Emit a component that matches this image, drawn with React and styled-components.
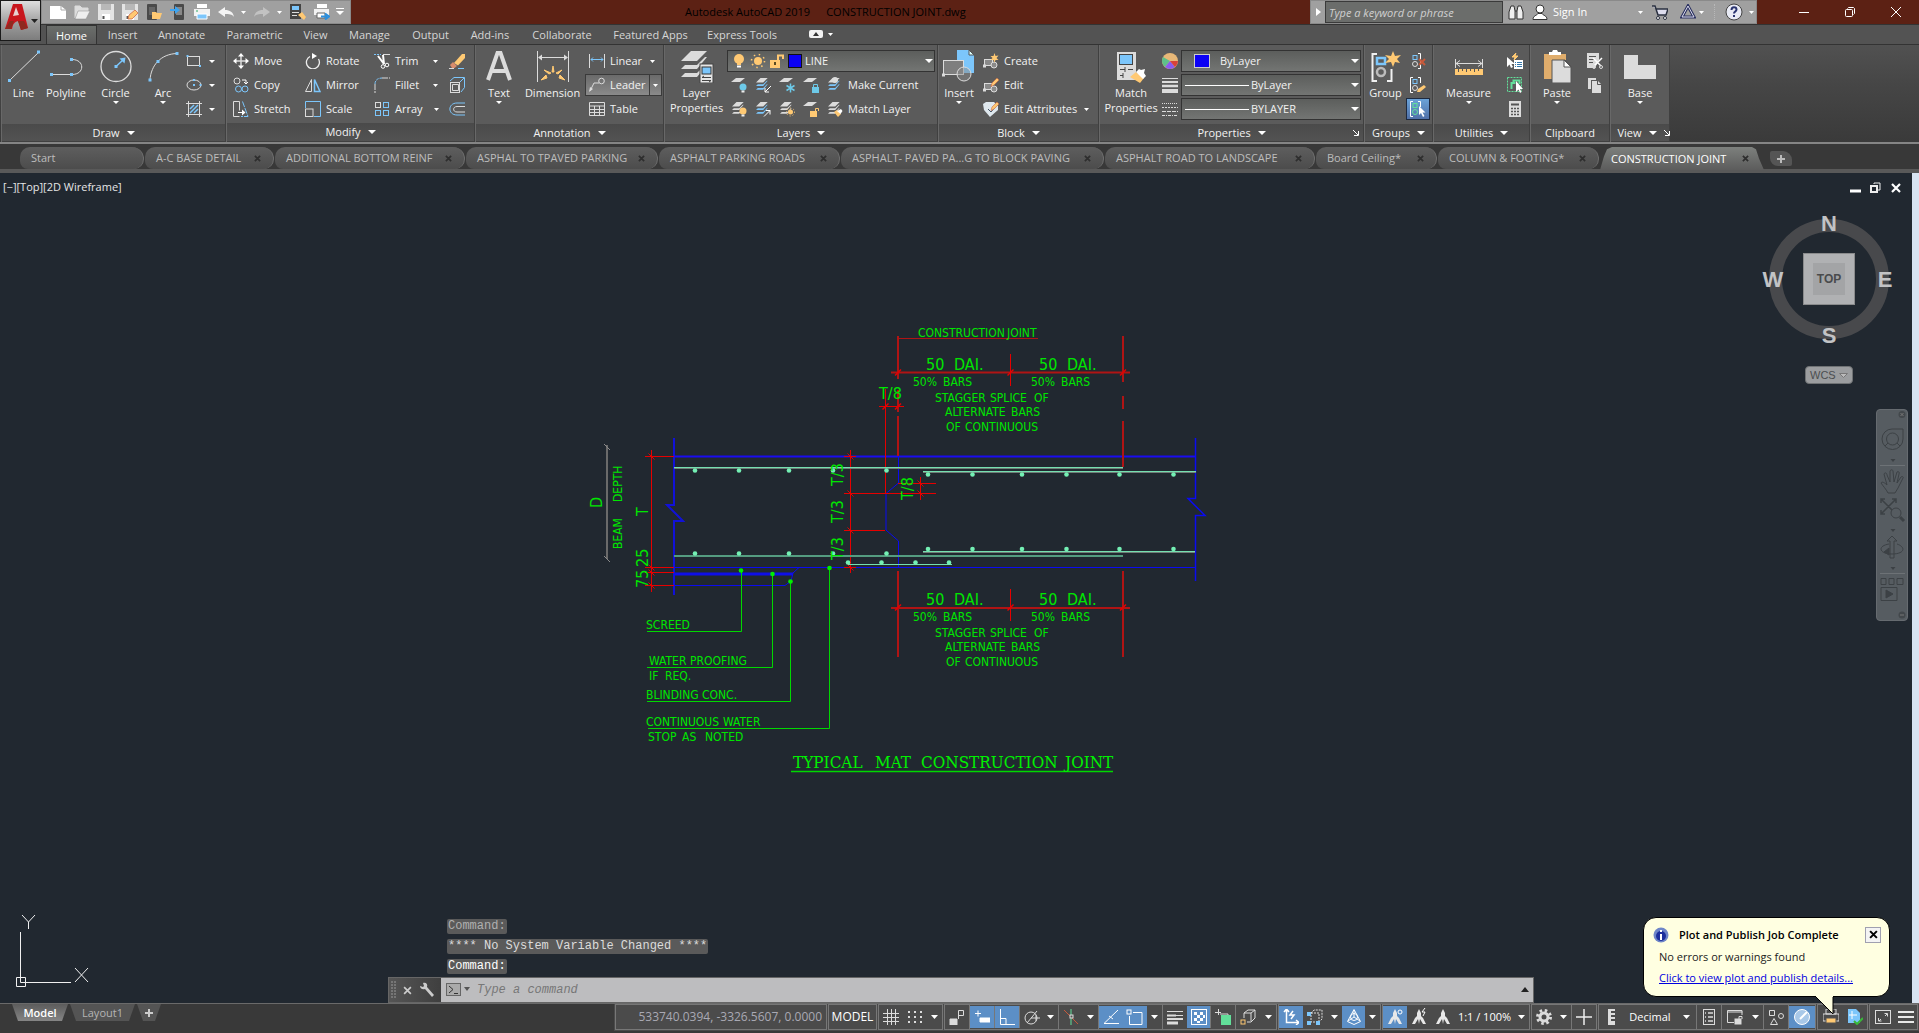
import React from 'react';
import styled, { createGlobalStyle, css } from 'styled-components';

const W = '#dcdcdc';
const B = '#7cc6fb';
const Y = '#ffc973';
const G = '#62e09a';
const R = '#c8593a';

const Global = createGlobalStyle`
  *, *::before, *::after { box-sizing: border-box; }
  html, body, #root { height: 100%; }
  body { margin: 0; background: #212830; color: #f2f2f2; font: 11px/16px "Open Sans", "Noto Sans", sans-serif; overflow: hidden; }
  button, input, select { font: inherit; color: inherit; margin: 0; padding: 0; border: 0; background: none; outline: 0; }
  svg { display: block; flex: none; }
  ul { list-style: none; margin: 0; padding: 0; }
`;

const Page = styled.div`
  height: 100vh;
  display: flex;
  flex-direction: column;
`;

/* ---------- title bar ---------- */
const TitleBar = styled.header`
  display: flex;
  height: 24px;
  flex: none;
  background: #5c2114;
  padding-left: 41px;
`;
const QuickBar = styled.div`
  display: flex;
  align-items: center;
  width: 310px;
  padding: 0 4px;
  background: #a0a0a0;
  border: 1px solid #8a8a8a;
`;
const QuickButton = styled.button`
  flex: none;
  width: ${p => p.$w || 24}px;
  height: 22px;
  display: flex;
  align-items: center;
  justify-content: center;
`;
const AppButton = styled.button`
  position: absolute;
  left: 0;
  top: 0;
  width: 41px;
  height: 41px;
  background: linear-gradient(#dedede, #9a9a9a 60%, #7d7d7d);
  border: 1px solid #1a1a1a;
`;
const WindowTitle = styled.h1`
  flex: 1;
  display: flex;
  gap: 16px;
  margin: 0;
  padding-left: 334px;
  font-size: 11px;
  font-weight: 400;
  line-height: 24px;
  color: #000;
  white-space: nowrap;
`;
const InfoCenter = styled.div`
  display: flex;
  align-items: center;
  flex: none;
  width: 447px;
  background: #a0a0a0;
  border: 1px solid #8a8a8a;
`;
const SearchBox = styled.input`
  flex: none;
  width: 178px;
  height: 22px;
  padding: 0 3px;
  background: #6b6d6b;
  border: 1px solid #3a3a3a;
  font-style: italic;
  &::placeholder { color: #d0d0d0; opacity: 1; }
`;
const SignIn = styled.button`
  width: 86px;
  padding-left: 1px;
  text-align: left;
  color: #fff;
`;
const Divider = styled.span`
  height: 16px;
  margin: 0 4px 0 10px;
  border-left: 1px dotted #b8b8b8;
`;
const WindowButtons = styled.div`
  display: flex;
  width: 162px;
  padding-left: 24px;
`;
const WindowButton = styled.button`
  width: 46px;
  display: flex;
  align-items: center;
  justify-content: center;
`;

/* ---------- ribbon ---------- */
const RibbonTabs = styled.nav`
  display: flex;
  align-items: flex-end;
  flex: none;
  height: 21px;
  padding-left: 46px;
  background: #535353;
  border-top: 1px solid #333;
  border-bottom: 1px solid #333;
`;
const RibbonTab = styled.button`
  width: ${p => p.$w}px;
  height: 19px;
  line-height: 17px;
  color: #d6d6d6;
  white-space: nowrap;
  ${p => p.$active && css`
    color: #fff;
    background: linear-gradient(#6b6e6b, #5a5a5a);
    border: 1px solid #333;
    border-bottom: 0;
  `}
`;
const Ribbon = styled.section`
  display: flex;
  flex: none;
  height: 99px;
  padding-left: 1px;
  background: linear-gradient(#515151, #464646 40%, #3a3a3a);
  border-bottom: 2px solid #858585;
`;
const Panel = styled.section`
  width: ${p => p.$w}px;
  flex: none;
  display: flex;
  flex-direction: column;
  background: #5b5b5b;
  border-left: 1px solid #686868;
  border-right: 1px solid #404040;
`;
const PanelBody = styled.div`
  flex: 1;
  display: flex;
  padding: 4px 0 0 ${p => p.$left || 0}px;
`;
const PanelTitle = styled.button`
  height: 19px;
  display: flex;
  align-items: center;
  justify-content: center;
  gap: 7px;
  padding: 0 4px;
  background: linear-gradient(#4a4a4a, #535353);
  border-bottom: 1px solid #404040;
  width: 100%;
`;
const TitleEdge = styled.span`
  flex: 1;
  display: flex;
  justify-content: flex-end;
`;
const Big = styled.button`
  width: ${p => p.$w}px;
  height: 75px;
  display: flex;
  flex-direction: column;
  align-items: center;
  white-space: pre;
  line-height: 15px;
  svg + span { margin-top: 2px; }
  span + svg { margin-top: 1px; }
`;
const Stack = styled.div`
  display: flex;
  flex-direction: column;
  width: ${p => p.$w}px;
`;
const Small = styled.button`
  height: 24px;
  display: flex;
  align-items: center;
  gap: 5px;
  padding-left: 4px;
  white-space: nowrap;
  > svg:last-child:not(:first-child) { margin-left: ${p => (p.$push ? p.$push : 2)}px; }
`;
const IconRow = styled.div`
  display: flex;
  align-items: center;
  height: 24px;
`;
const SplitButton = styled.div`
  display: flex;
  width: 77px;
  height: 22px;
  margin: 1px 0;
  border: 1px solid #3a3a3a;
  background: linear-gradient(#6a6a6a, #8a8a8a);
`;
const SplitMain = styled.button`
  flex: 1;
  display: flex;
  align-items: center;
  gap: 5px;
  padding-left: 3px;
  border-right: 1px solid #3a3a3a;
`;
const SplitArrow = styled.button`
  width: 11px;
  display: flex;
  align-items: center;
  justify-content: center;
`;
const Combo = styled.label`
  display: flex;
  align-items: center;
  gap: ${p => p.$gap || 4}px;
  height: 22px;
  margin: 1px 0;
  padding: 0 1px 0 ${p => p.$left || 4}px;
  border: 1px solid #333;
  background: linear-gradient(#5c5e5c, #737573);
  select { flex: 1; min-width: 0; appearance: none; }
  option { color: #111; }
`;
const Swatch = styled.span`
  width: ${p => p.$w || 14}px;
  height: 14px;
  background: #0b00f5;
  border: 1px solid ${p => p.$edge || '#111'};
`;
const LineSample = styled.span`
  width: 64px;
  height: 1px;
  background: #fff;
`;
const ActiveIcon = styled.button`
  width: 24px;
  height: 22px;
  margin-top: 1px;
  display: flex;
  align-items: center;
  justify-content: center;
  background: linear-gradient(#6aa2d8, #5070a8);
  border: 1px solid #1e2a40;
`;

/* ---------- file tabs ---------- */
const FileTabs = styled.nav`
  display: flex;
  flex: none;
  height: 29px;
  padding: 3px 0 0 20px;
  background: #383838;
  border-bottom: 4px solid #595959;
`;
const FileTab = styled.div`
  flex: none;
  display: flex;
  align-items: center;
  justify-content: space-between;
  width: ${p => p.$w}px;
  height: 22px;
  margin-right: 1px;
  padding: 0 12px 0 11px;
  border-radius: 10px 12px 10px 8px;
  border-right: 1px solid #707070;
  background: linear-gradient(#5e5e5e, #4c4c4c);
  color: #bdbdbd;
  white-space: nowrap;
  ${p => p.$active && css`
    color: #fff;
    height: 23px;
    border: 0;
    padding-right: 15px;
    border-radius: 0;
    background: linear-gradient(#7d807d, #5c5c5c);
    clip-path: polygon(0 100%, 4px 40%, 7px 10%, 12px 0, calc(100% - 12px) 0, calc(100% - 8px) 10%, calc(100% - 5px) 50%, 100% 100%);
  `}
`;
const NewTab = styled.button`
  width: 22px;
  height: 15px;
  margin: 4px 0 0 5px;
  display: flex;
  align-items: center;
  justify-content: center;
  background: #555;
  border-radius: 2px 9px 2px 8px;
`;

/* ---------- drawing area ---------- */
const Canvas = styled.main`
  position: relative;
  flex: 1;
  min-height: 0;
  background: #212830;
  border-right: 7px solid #d8e4f2;
`;
const ViewLabel = styled.button`
  position: absolute;
  left: 3px;
  top: 6px;
  color: #e6e6e6;
`;
const ViewportButtons = styled.div`
  position: absolute;
  right: 8px;
  top: 8px;
  display: flex;
  gap: 7px;
`;
const Drawing = styled.svg`
  position: absolute;
  left: 580px;
  top: 137px;
`;
const Cad = styled.text`
  font-family: "DejaVu Sans Condensed", "DejaVu Sans", sans-serif;
  font-size: ${p => (p.$wide ? 16 : 12)}px;
  font-weight: 400;
  fill: #00e600;
`;
const CadTitle = styled.text`
  font-family: "DejaVu Serif Condensed", "DejaVu Serif", serif;
  font-size: 17px;
  fill: #00f000;
`;
const Ucs = styled.svg`
  position: absolute;
  left: 14px;
  bottom: 12px;
`;
const Compass = styled.svg`
  position: absolute;
  right: 16px;
  top: 34px;
  text { font-family: "Liberation Sans", sans-serif; font-weight: 700; text-anchor: middle; }
`;
const Wcs = styled.button`
  position: absolute;
  right: 59px;
  top: 193px;
  width: 48px;
  height: 18px;
  display: flex;
  align-items: center;
  justify-content: space-between;
  padding: 0 4px;
  border: 1px solid #6f7274;
  border-radius: 4px;
  background: #9b9d9f;
  color: #4b4e50;
  font: 11px/14px "Liberation Sans", sans-serif;
`;
const NavBar = styled.div`
  position: absolute;
  right: 4px;
  top: 236px;
  width: 32px;
  height: 212px;
  border-radius: 4px;
  background: #565c61;
  border: 1px solid #666b70;
`;
const CommandDock = styled.section`
  position: absolute;
  left: 388px;
  bottom: 0;
  width: 1146px;
  font: 12px/15px "Liberation Mono", monospace;
`;
const History = styled.ul`
  display: flex;
  flex-direction: column;
  align-items: flex-start;
  gap: 5px;
  padding: 0 0 3px 59px;
`;
const HistoryLine = styled.li`
  padding: 0 1px;
  border-radius: 2px;
  background: #5a5a5a;
  color: ${p => p.$c};
`;
const CommandBar = styled.div`
  display: flex;
  height: 26px;
  border: 1px solid #666;
  background: #bdbdbf;
`;
const CommandTools = styled.div`
  display: flex;
  align-items: center;
  gap: 7px;
  width: 52px;
  padding-left: 2px;
  background: linear-gradient(90deg, #555, #3f3f3f);
`;
const CommandInput = styled.input`
  flex: 1;
  padding-left: 6px;
  font-style: italic;
  color: #333;
  &::placeholder { color: #777; opacity: 1; }
`;
const PlainButton = styled.button`
  display: flex;
  align-items: center;
  justify-content: center;
`;

/* ---------- status bar ---------- */
const StatusBar = styled.footer`
  display: flex;
  flex: none;
  justify-content: space-between;
  height: 30px;
  background: #393939;
  border-top: 1px solid #6a6a6a;
`;
const LayoutTabs = styled.nav`
  display: flex;
  padding-left: 12px;
  gap: 2px;
`;
const LayoutTab = styled.button`
  height: 17px;
  width: ${p => p.$w}px;
  line-height: 16px;
  color: #b5b5b5;
  background: #545454;
  clip-path: polygon(0 0, 100% 0, calc(100% - 6px) 100%, 6px 100%);
  display: flex;
  align-items: center;
  justify-content: center;
  ${p => p.$active && css`
    color: #fff;
    font-weight: 600;
    background: linear-gradient(#5c5c5c, #858585);
  `}
`;
const Tray = styled.div`
  display: flex;
  height: 27px;
  padding-left: 1px;
  background: #4b4b4b;
`;
const Group = styled.div`
  display: flex;
  align-items: center;
  height: 26px;
  margin-right: 1px;
  border: 1px solid #777;
`;
const Cell = styled.button`
  width: ${p => p.$w || 24}px;
  height: ${p => (p.$on ? 22 : 24)}px;
  display: flex;
  align-items: center;
  justify-content: center;
  border-right: ${p => (p.$line ? '1px solid #777' : 0)};
  background: ${p => (p.$on ? '#5c8fc6' : 'none')};
`;
const Coords = styled.output`
  width: 210px;
  padding-right: 4px;
  text-align: right;
  font-size: 12px;
  color: #a9a9b4;
`;
const StatusText = styled.button`
  width: ${p => p.$w}px;
  text-align: center;
  white-space: nowrap;
  font-size: ${p => p.$size || 11}px;
  color: #fff;
`;

/* ---------- notification ---------- */
const Balloon = styled.aside`
  position: absolute;
  right: 29px;
  bottom: 36px;
  width: 247px;
  height: 80px;
  padding: 8px 8px 0 15px;
  background: #ffffe1;
  border: 1px solid #000;
  border-radius: 13px;
  color: #222;
`;
const BalloonHead = styled.div`
  display: flex;
  align-items: center;
  height: 17px;
  margin-left: -6px;
  gap: 10px;
  color: #000;
  strong { flex: 1; font-weight: 600; white-space: nowrap; }
`;
const BalloonText = styled.p`
  margin: 6px 0 5px;
`;
const BalloonLink = styled.a`
  color: #0000e0;
`;
const BalloonClose = styled.button`
  width: 16px;
  height: 16px;
  display: flex;
  align-items: center;
  justify-content: center;
  border: 1px solid #a0a0b0;
  background: #f4f4f4;
`;
const Tail = styled.svg`
  position: absolute;
  left: 170px;
  top: 77px;
`;

/* ---------- icons ---------- */
const I = ({ w = 16, h = 16, s = W, sw = 1, f = 'none', children, ...rest }) => (
  <svg width={w} height={h} viewBox={`0 0 ${w} ${h}`} fill={f} stroke={s} strokeWidth={sw} aria-hidden="true" {...rest}>
    {children}
  </svg>
);
const Caret = ({ w = 6, c = '#fff' }) => (
  <svg width={w} height={Math.ceil(w / 2)} viewBox="0 0 10 5" preserveAspectRatio="none" aria-hidden="true"><path d="M0 0h10L5 5z" fill={c} /></svg>
);
const Cross = ({ c = '#2e2e2e', size = 7, sw = 2 }) => (
  <svg width={size} height={size} viewBox="0 0 8 8" fill="none" stroke={c} strokeWidth={sw} aria-hidden="true"><path d="M1 1l6 6M7 1L1 7" /></svg>
);
const Dots = ({ pts, c = B, r = 1.5 }) => pts.map(([x, y]) => (
  <rect key={`${x},${y}`} x={x - r} y={y - r} width={r * 2} height={r * 2} fill={c} stroke="none" />
));

const LineIcon = () => <I w={34} h={34}><path d="M3 31L32 3" /><Dots pts={[[2.5, 31.5], [31.5, 3]]} /></I>;
const PolyIcon = () => <I w={34} h={34}><path d="M3 25.5H23M23 10.5c13 0 13 15 0 15" /><Dots pts={[[2.5, 25.5], [22.5, 25.5], [22.5, 10.5]]} /></I>;
const CircleIcon = () => <I w={34} h={34}><circle cx="17" cy="17.5" r="15" strokeWidth="1.3" /><path d="M17 17.5L25 10" stroke={B} strokeWidth="1.5" /><path d="M20.5 9.5l6-1-1 6z" fill={B} stroke="none" /><Dots pts={[[17, 17.5]]} /></I>;
const ArcIcon = () => <I w={34} h={34}><path d="M4 31C5 16 15 5 31 4.5" /><Dots pts={[[4, 31], [12, 12.5], [31, 4.5]]} /></I>;
const RectIcon = () => <I><rect x="1.5" y="3.5" width="12" height="9" /><Dots pts={[[1.5, 3], [14, 13]]} r={1} /></I>;
const EllipseIcon = () => <I><ellipse cx="8" cy="8" rx="7" ry="5" /><Dots pts={[[8, 3], [8, 8], [14.5, 8]]} r={1} /></I>;
const HatchIcon = () => <I><path d="M2.5 0v16M13.5 0v16M0 2.5h16M0 13.5h16" /><path d="M4 8l4-4M4 12l8-8M8 12l4-4" stroke={B} strokeWidth="1.5" /></I>;
const MoveIcon = () => <I><path d="M8 2v12M2 8h12" strokeWidth="1.5" /><path d="M8 0l3 3.5H5zM8 16l3-3.5H5zM0 8l3.5-3v6zM16 8l-3.5-3v6z" fill="#fff" stroke="none" /></I>;
const CopyIcon = () => <I><circle cx="4" cy="4" r="3" /><path d="M9 3h4v4M11 5l2 2 2-2" stroke="#fff" /><circle cx="5.500" cy="12" r="3" stroke={B} /><circle cx="12" cy="12" r="3" stroke={B} /></I>;
const StretchIcon = () => <I><path d="M6.5 15.5h-6V.5h6v9" /><path d="M5 11.5h5" stroke="#fff" /><path d="M9 8.5l3.5 3L9 14.5z" fill="#fff" stroke="none" /><path d="M9.5.5l5.5 15H8" stroke={B} strokeDasharray="6 1" /></I>;
const RotateIcon = () => <I><path d="M5 3.5A6.5 6.5 0 1 0 13.5 6" stroke="#eee" strokeWidth="1.3" /><path d="M7 0l5 3-5 3z" fill="#fff" stroke="none" /></I>;
const MirrorIcon = () => <I><path d="M6.5 2.5v12H.5z" /><path d="M9.5 2.5v12h5.5z" stroke={B} strokeWidth="1.5" /></I>;
const ScaleIcon = () => <I><path d="M.5 7V.5h15v15H9" stroke={B} /><rect x=".5" y="8" width="7.5" height="7.5" /></I>;
const TrimIcon = () => <I><path d="M0 1.5h7" stroke={B} strokeDasharray="2 1" /><path d="M9 1.5h7" /><path d="M4 3l6 8M9 2l1 9" stroke="#fff" strokeWidth="2" /><circle cx="9" cy="13.5" r="1.8" stroke="#fff" /><circle cx="13" cy="12" r="1.8" stroke="#fff" /></I>;
const FilletIcon = () => <I><path d="M1 7C1 3 4 1 8 1" stroke={B} strokeDasharray="3 1" /><path d="M8 1h8M1 7v9" strokeDasharray="6 1" /></I>;
const ArrayIcon = () => <I><rect x="1.5" y="1.5" width="5" height="5" /><rect x="9.5" y="1.5" width="5" height="5" stroke={B} /><rect x="1.5" y="9.5" width="5" height="5" stroke={B} /><rect x="9.5" y="9.5" width="5" height="5" stroke={B} /></I>;
const EraseIcon = () => <I><path d="M5 10L13 1l3 0v4L9 12.5z" fill={Y} stroke="none" /><path d="M1 12l3-3 4 4-2.5 2H3z" fill="#d98c6c" stroke="none" /><path d="M9 15.5h6" stroke={B} /><path d="M0 15.5h5" /></I>;
const ExplodeIcon = () => <I><rect x="1.5" y="5.5" width="9" height="10" /><path d="M3.5 7.5h6v6h-6z" stroke={W} /><path d="M1 4L5 .5h10.5v10L12 15M11 5l4-4" stroke={B} /></I>;
const OffsetIcon = () => <I><path d="M16 2H8C-1.5 2-1.5 14 8 14h8" stroke={B} /><path d="M16 5.5H8c-4.5 0-4.5 5.5 0 5.5h8" /></I>;
const TextIcon = () => <I w={34} h={34} s={W} sw={4}><path d="M6 31L15.5 4h3L28 31M9 22h16" /></I>;
const DimIcon = () => <I w={34} h={34}><path d="M1.5 2v31M32.5 2v31M3 8.5h28" /><path d="M6 5.5L2 8.5l4 3zM28 5.5l4 3-4 3z" fill={W} stroke="none" /><path d="M5 31l6-2-1-3zM8 21l5 4 2-1zM17 17l-1 6h2zM26 21l-4 4-2-1zM29 31l-6-2 1-3z" fill={Y} stroke={Y} /></I>;
const LinearIcon = () => <I><path d="M.5 1v14M15.5 1v14" /><path d="M2 6.5h12M4 4.5l-2 2 2 2M12 4.5l2 2-2 2" stroke={B} /></I>;
const LeaderIcon = () => <I><path d="M1 14L5 6h5" /><circle cx="12.5" cy="4" r="2.8" /><path d="M0 15l1-5 3 2z" fill={W} stroke="none" /></I>;
const TableIcon = () => <I><path d="M.5 1.5h15v13H.5zM.5 5h15M.5 8.5h15M.5 11.5h15M5.5 5v9M10.5 5v9" /></I>;
const sheets = (x = 0, y = 0, k = 1, mid = W) => (
  <g transform={`translate(${x} ${y}) scale(${k})`} stroke="none">
    <path d="M0 5L5 0h8L8 5z" fill={W} /><path d="M0 9l2-2h6l4-4h1L8 9z" fill={mid} /><path d="M0 13l2-2h6l4-4h1L8 13z" fill={mid} />
  </g>
);
const LayerPropIcon = () => <I w={34} h={34}>{sheets(1, 2, 2)}<rect x="20" y="15" width="13" height="19" fill="#e6e6e6" stroke="#444" /><rect x="22" y="18" width="9" height="7" fill={B} stroke="#333" /><path d="M22 28.5h9M22 31.5h9M24 27l-2 1.5M29 33l2-1.5" stroke="#444" /></I>;
const LayerIcon = ({ kind }) => (
  <I>
    {['bulb', 'freeze', 'lock', 'unlock'].includes(kind) ? <path d="M0 5L5 1h9L9 5z" fill={W} stroke="none" /> : sheets(1, 1, 0.9, ['in', 'out', 'cur'].includes(kind) ? B : W)}
    {kind === 'bulb' && <><circle cx="12" cy="10" r="3.5" fill="#6dc9e8" stroke="none" /><path d="M10.5 14.5h3" stroke="#eee" strokeWidth="2" /></>}
    {kind === 'bulbOn' && <><circle cx="12" cy="10" r="3.5" fill={Y} stroke="none" /><path d="M10.5 14.5h3" stroke="#eee" strokeWidth="2" /></>}
    {kind === 'in' && <path d="M16 9l-6 6M10 11v4h4" stroke="#fff" />}
    {kind === 'out' && <path d="M9 15.5l6-6M11 9.5h4v4" stroke="#fff" />}
    {kind === 'freeze' && <path d="M11.5 6.5v9M7.5 8.5l8 5M15.5 8.5l-8 5" stroke="#6dc9e8" strokeWidth="1.5" />}
    {kind === 'sun' && <><circle cx="11.5" cy="11" r="2.5" fill={Y} stroke="none" /><circle cx="11.5" cy="11" r="4" stroke={Y} strokeDasharray="1 2" /></>}
    {kind === 'lock' && <><rect x="9" y="10" width="7" height="6" fill="#6dc9e8" stroke="none" /><path d="M10.5 10V7.5h4V10" stroke="#6dc9e8" /></>}
    {kind === 'unlock' && <><rect x="7" y="10" width="7" height="6" fill={Y} stroke="none" /><path d="M12.5 10V7.5h3V10" stroke={Y} /></>}
    {kind === 'cur' && <circle cx="8" cy="3" r="3" fill={W} stroke="none" />}
    {kind === 'match' && <><path d="M7 11l3-2 4 4-3 3z" fill={Y} stroke="none" /><path d="M10 10l4-2 1.5 2-2 3z" fill="#fff" stroke="none" /></>}
  </I>
);
const BulbIcon = () => <I><circle cx="8" cy="6" r="5" fill={Y} stroke="none" /><path d="M6 10h4v2H6z" fill={Y} stroke="none" /><path d="M6 13.5h4" stroke="#fff" strokeWidth="2" /></I>;
const SunIcon = () => <I><circle cx="8" cy="8" r="4" fill={Y} stroke="none" /><circle cx="8" cy="8" r="6.5" stroke={Y} strokeWidth="1.6" strokeDasharray="1.5 3.6" /></I>;
const LockIcon = () => <I><rect x="1" y="7" width="10" height="8" fill={Y} stroke="none" /><path d="M9 7V2.5h5V6" stroke={Y} strokeWidth="2" /><path d="M6 9v3" stroke="#5a4a20" strokeWidth="2" /></I>;
const InsertIcon = () => <I w={34} h={34}><path d="M15 1h12l5 5v18H15z" fill={B} stroke="none" /><path d="M27 1v5h5z" fill="#dff" stroke="#555" /><rect x="1.5" y="11.5" width="20" height="14" fill="#7e7e7e" /><circle cx="22" cy="25" r="7" fill="#8a8a8a80" /><Dots pts={[[1.5, 26]]} c={W} /></I>;
const BlockIcon = ({ kind }) => (
  <I>
    {kind === 'attr'
      ? <><path d="M0 3l3-2h8l4 4v4l-8 7-6-7z" fill="#dfe8ee" stroke="none" /><path d="M5 8l3 3 5-6" stroke="#456" /></>
      : <><rect x="1.5" y="6.5" width="8" height="6" fill="#8a8a8a" /><circle cx="11" cy="12" r="3" fill="#8a8a8a" /><Dots pts={[[1.5, 13]]} c={W} /></>}
    {kind === 'new' ? <path d="M11.5 0l1 3 3-.5-2 2.5 2 2-3 0-1 2.5-1-2.5-3 0 2-2-2-2 3 0z" fill={Y} stroke="none" />
      : <path d="M8 9.5L9 6l5-5 2 2-5 5z" fill={Y} stroke={R} strokeWidth=".5" />}
  </I>
);
const MatchPropIcon = () => <I w={34} h={34}><rect x="3" y="3" width="19" height="28" fill={W} stroke="none" /><rect x="5.5" y="5.5" width="13" height="10" fill={B} stroke="#444" /><path d="M6 20.5h5M14 20.5h5M6 26.5h3M11 18v5M9 24v5" stroke="#444" /><path d="M16 28l6-5 8 6-4 5z" fill={Y} stroke="none" /><path d="M22 23l3-3 2 1 4-1-1 4 2 3-3 3z" fill="#fff" stroke="none" /></I>;
const WheelIcon = () => <I s="none"><circle cx="8" cy="8" r="8" fill="#e8b878" /><path d="M8 8L1 4a8 8 0 0 0 2 10z" fill="#5fc08a" /><path d="M8 8l-5 6a8 8 0 0 0 10 0z" fill="#8a5cf0" /><path d="M8 8l5 6a8 8 0 0 0 3-6z" fill="#d8423a" /></I>;
const WeightIcon = () => <I><path d="M0 1.5h16" /><path d="M0 5h16" strokeWidth="2" /><path d="M0 9h16" strokeWidth="2.5" /><path d="M0 14h16" strokeWidth="4" /></I>;
const LtypeIcon = () => <I><path d="M0 2.5h16" strokeDasharray="1 1" /><path d="M0 6.5h16" strokeDasharray="2 1" /><path d="M0 10.5h16" strokeDasharray="4 1" /><path d="M0 14.5h16" strokeDasharray="3 1 1 1" /></I>;
const GroupIcon = () => <I w={34} h={34}><path d="M8 5H3.5v27H8M18 32h4.5V20" stroke="#f0f0f0" strokeWidth="2" /><path d="M8 9h8v6H8z" stroke={B} strokeWidth="2.5" /><circle cx="12" cy="23" r="4" strokeWidth="2.5" stroke="#bbb" /><path d="M24 2l2 5 6-1-4 4 3 4-5-1-2 5-2-5-6 1 4-4-4-4 6 1z" fill={Y} stroke="none" /></I>;
const UngroupIcon = ({ edit, cur }) => <I><path d={edit || cur ? 'M3 .5H.5v15H3M8 .5h2.5V6' : 'M8 .5h2.5v15H8'} stroke="#fff" /><rect x="3" y="2.5" width="4" height="4" stroke={cur ? G : B} /><circle cx="5" cy="11" r="2.5" stroke={cur ? G : W} />{cur ? <path d="M9 5v9l2-2 2 4 1.5-1-2-3.5h3z" fill="#fff" stroke="none" /> : edit ? <path d="M7 15l1-3 6-4 2 2-6 5z" fill={Y} stroke="none" /> : <path d="M9 6l6 6M15 6l-6 6" stroke={R} strokeWidth="2" />}</I>;
const MeasureIcon = () => <I w={34} h={34}><path d="M3.5 10v9M30.5 10v9M4 14.5h26M8 11.5l-4 3 4 3M26 11.5l4 3-4 3" /><path d="M3 20h28v6H3z" fill={Y} stroke="none" /><path d="M6.5 20v3M10.5 20v2M14.5 20v3M18.5 20v2M22.5 20v3M26.5 20v2" stroke="#555" /></I>;
const QSelIcon = () => <I><path d="M0 4v10l2.5-2.5L4 15l2-1-1.5-3H8z" fill="#fff" stroke="none" /><path d="M9 0L5 4l3 0-1 3 4-4-3 0z" fill={Y} stroke={Y} /><rect x="7" y="7" width="9" height="9" fill="#fff" stroke="none" /><path d="M8 9.5h1M8 11.5h1M8 13.5h1M10 9.5h5M10 11.5h5M10 13.5h5" stroke="#37a" /></I>;
const SelAllIcon = () => <I><rect x=".5" y=".5" width="14" height="14" stroke={G} strokeDasharray="2 1" /><path d="M4.5 12V6h4M9.5 3.5h3V7M6.5 6V3.5h3" stroke={G} strokeWidth="2" /><path d="M9 4v11l2.5-2.5L13 16l1.5-1L13 12h3z" fill="#fff" stroke="none" /></I>;
const CalcIcon = () => <I><rect x="2" y="0" width="12" height="16" fill={W} stroke="none" /><path d="M4 3.5h8" stroke="#555" strokeWidth="2" /><path d="M4 7.5h8M4 10.5h8M4 13.5h8" stroke="#555" strokeWidth="1.5" strokeDasharray="2 1" /></I>;
const PasteIcon = () => <I w={34} h={34} s="none"><path d="M4 5h22v25H4z" fill="#e0ad6c" /><path d="M9 6V3h3l1-2h4l1 2h3v3z" fill="#fff" /><path d="M12 11h13l6 6v17H12z" fill="#dcdcdc" stroke="#555" /><path d="M24 11v7h7z" fill="#fff" stroke="#555" /></I>;
const CutIcon = () => <I><path d="M0 0h12v7l-4 8H0z" fill={W} stroke="none" /><path d="M2 3.5h7M2 6.5h5M2 9.5h4" stroke="#555" /><path d="M6 5l8 8M15 5l-8 8" stroke="#fff" strokeWidth="1.5" /><circle cx="7" cy="14" r="1.5" /><circle cx="14" cy="14" r="1.5" /></I>;
const CopyClipIcon = () => <I><path d="M1 1h8v2H4v9H1z" fill={W} stroke="none" /><path d="M5 4h6l3 3v9H5z" fill={W} stroke="none" /><path d="M10.5 4v3.5H14" stroke="#555" /></I>;
const BaseIcon = () => <I w={34} h={34} s="none"><path d="M1 6h14v10h18v14H1z" fill={W} /></I>;

/* ---------- ribbon content ---------- */
const RIBBON_TABS = [['Home', 51], ['Insert', 51], ['Annotate', 67], ['Parametric', 79], ['View', 43], ['Manage', 65], ['Output', 57], ['Add-ins', 62], ['Collaborate', 82], ['Featured Apps', 95], ['Express Tools', 88]];
const FILE_TABS = [['Start', 124], ['A-C BASE DETAIL', 129], ['ADDITIONAL BOTTOM REINF', 190], ['ASPHAL TO TPAVED PARKING', 192], ['ASPHALT PARKING ROADS', 181], ['ASPHALT- PAVED PA...G TO BLOCK PAVING', 263], ['ASPHALT ROAD TO LANDSCAPE', 210], ['Board Ceiling*', 121], ['COLUMN & FOOTING*', 161], ['CONSTRUCTION JOINT', 164]];

function BigTool({ icon, label, w, arrow }) {
  return <Big $w={w}>{icon}<span>{label}</span>{arrow && <Caret />}</Big>;
}
function RibbonPanel({ title, w, left, arrow = true, launcher, children }) {
  return (
    <Panel $w={w}>
      <PanelBody $left={left}>{children}</PanelBody>
      <PanelTitle>
        {launcher && <TitleEdge />}
        {title}
        {arrow && <Caret w={8} />}
        {launcher && <TitleEdge><I w={6} h={6} s="#fff"><path d="M0 0l5 5M5.5 1v4.5H1" /></I></TitleEdge>}
      </PanelTitle>
    </Panel>
  );
}

function RibbonArea() {
  return (
    <Ribbon>
      <RibbonPanel title="Draw" w={225}>
        <BigTool w={43} icon={<LineIcon />} label="Line" />
        <BigTool w={42} icon={<PolyIcon />} label="Polyline" />
        <BigTool w={57} icon={<CircleIcon />} label="Circle" arrow />
        <BigTool w={38} icon={<ArcIcon />} label="Arc" arrow />
        <Stack $w={40}>
          <Small aria-label="Rectangle"><RectIcon /><Caret /></Small>
          <Small aria-label="Ellipse"><EllipseIcon /><Caret /></Small>
          <Small aria-label="Hatch"><HatchIcon /><Caret /></Small>
        </Stack>
      </RibbonPanel>
      <RibbonPanel title="Modify" w={249} left={2}>
        <Stack $w={72}>
          <Small><MoveIcon />Move</Small>
          <Small><CopyIcon />Copy</Small>
          <Small><StretchIcon />Stretch</Small>
        </Stack>
        <Stack $w={69}>
          <Small><RotateIcon />Rotate</Small>
          <Small><MirrorIcon />Mirror</Small>
          <Small><ScaleIcon />Scale</Small>
        </Stack>
        <Stack $w={75}>
          <Small $push={9}><TrimIcon />Trim<Caret w={5} /></Small>
          <Small $push={9}><FilletIcon />Fillet<Caret w={5} /></Small>
          <Small $push={6}><ArrayIcon />Array<Caret w={5} /></Small>
        </Stack>
        <Stack $w={24}>
          <Small aria-label="Erase"><EraseIcon /></Small>
          <Small aria-label="Explode"><ExplodeIcon /></Small>
          <Small aria-label="Offset"><OffsetIcon /></Small>
        </Stack>
      </RibbonPanel>
      <RibbonPanel title="Annotation" w={189} left={2}>
        <BigTool w={42} icon={<TextIcon />} label="Text" arrow />
        <BigTool w={65} icon={<DimIcon />} label="Dimension" />
        <Stack $w={78}>
          <Small $push={3}><LinearIcon />Linear<Caret w={5} /></Small>
          <SplitButton>
            <SplitMain><LeaderIcon />Leader</SplitMain>
            <SplitArrow aria-label="Leader options"><Caret w={5} /></SplitArrow>
          </SplitButton>
          <Small><TableIcon />Table</Small>
        </Stack>
      </RibbonPanel>
      <RibbonPanel title="Layers" w={274} left={1}>
        <BigTool w={61} icon={<LayerPropIcon />} label={'Layer\nProperties'} />
        <Stack $w={208}>
          <Combo $gap={3} $left={3}>
            <BulbIcon /><SunIcon /><LockIcon /><Swatch />
            <select aria-label="Layer"><option>LINE</option></select><Caret w={8} />
          </Combo>
          <IconRow>
            {['bulb', 'in', 'freeze', 'lock'].map(k => <QuickButton key={k} aria-label={k}><LayerIcon kind={k} /></QuickButton>)}
            <Small><LayerIcon kind="cur" />Make Current</Small>
          </IconRow>
          <IconRow>
            {['bulbOn', 'out', 'sun', 'unlock'].map(k => <QuickButton key={k} aria-label={k}><LayerIcon kind={k} /></QuickButton>)}
            <Small><LayerIcon kind="match" />Match Layer</Small>
          </IconRow>
        </Stack>
      </RibbonPanel>
      <RibbonPanel title="Block" w={161}>
        <BigTool w={40} icon={<InsertIcon />} label="Insert" arrow />
        <Stack $w={116}>
          <Small><BlockIcon kind="new" />Create</Small>
          <Small><BlockIcon kind="edit" />Edit</Small>
          <Small><BlockIcon kind="attr" />Edit Attributes<Caret w={5} /></Small>
        </Stack>
      </RibbonPanel>
      <RibbonPanel title="Properties" w={265} launcher>
        <BigTool w={62} icon={<MatchPropIcon />} label={'Match\nProperties'} />
        <Stack $w={19}>
          <IconRow><WheelIcon /></IconRow>
          <IconRow><WeightIcon /></IconRow>
          <IconRow><LtypeIcon /></IconRow>
        </Stack>
        <Stack $w={180}>
          <Combo $left={12} $gap={10}><Swatch $w={16} $edge="#ccc" /><select aria-label="Object color"><option>ByLayer</option></select><Caret w={8} /></Combo>
          <Combo $left={3} $gap={2}><LineSample /><select aria-label="Lineweight"><option>ByLayer</option></select><Caret w={8} /></Combo>
          <Combo $left={3} $gap={2}><LineSample /><select aria-label="Linetype"><option>BYLAYER</option></select><Caret w={8} /></Combo>
        </Stack>
      </RibbonPanel>
      <RibbonPanel title="Groups" w={69}>
        <BigTool w={41} icon={<GroupIcon />} label="Group" />
        <Stack $w={24}>
          <Small aria-label="Ungroup"><UngroupIcon /></Small>
          <Small aria-label="Group edit"><UngroupIcon edit /></Small>
          <ActiveIcon aria-label="Group selection"><UngroupIcon cur /></ActiveIcon>
        </Stack>
      </RibbonPanel>
      <RibbonPanel title="Utilities" w={97}>
        <BigTool w={69} icon={<MeasureIcon />} label="Measure" arrow />
        <Stack $w={25}>
          <Small aria-label="Quick select"><QSelIcon /></Small>
          <Small aria-label="Select all"><SelAllIcon /></Small>
          <Small aria-label="Calculator"><CalcIcon /></Small>
        </Stack>
      </RibbonPanel>
      <RibbonPanel title="Clipboard" w={80} arrow={false}>
        <BigTool w={52} icon={<PasteIcon />} label="Paste" arrow />
        <Stack $w={25}>
          <Small aria-label="Cut"><CutIcon /></Small>
          <Small aria-label="Copy clip"><CopyClipIcon /></Small>
        </Stack>
      </RibbonPanel>
      <RibbonPanel title="View" w={60} launcher>
        <BigTool w={59} icon={<BaseIcon />} label="Base" arrow />
      </RibbonPanel>
    </Ribbon>
  );
}

function QuickAccess() {
  return (
    <QuickBar>
      <QuickButton aria-label="New"><I s="none"><path d="M0 2h11l5 4v9H0z" fill="#fff" /><path d="M11 2v4h5" stroke="#aaa" /></I></QuickButton>
      <QuickButton aria-label="Open"><I><path d="M1 14V2h5l2 2h6v3" fill="#ddd" /><path d="M1 15l3-8h12l-4 8z" fill="#eee" stroke="#888" strokeWidth=".5" /></I></QuickButton>
      {[0, 1].map(n => (
        <QuickButton $w={24} key={n} aria-label={n ? 'Save As' : 'Save'}><I s="none"><path d="M0 0h16v16H0z" fill="#e4e4e4" /><path d="M3 0h10v6H3z" fill="#b8b8b8" /><path d="M4 10h8v6H4z" fill="#fff" /><path d="M5.5 12v3" stroke="#555" strokeWidth="2" />{n === 1 && <path d="M6 15l1-4 6-5 3 3-6 6z" fill={Y} stroke={R} strokeWidth=".7" />}</I></QuickButton>
      ))}
      <QuickButton aria-label="Open from web"><I s="none"><rect x="1" y="0" width="10" height="16" rx="1" fill="#4a4a4a" /><path d="M3 3h6v8H3z" fill="#666" /><path d="M6 15V8h4l1 1h5l-2 6z" fill={Y} /></I></QuickButton>
      <QuickButton aria-label="Save to web"><I s="none"><rect x="4" y="0" width="10" height="16" rx="1" fill="#4a4a4a" /><path d="M6 3h6v8H6z" fill="#888" /><path d="M0 5h5V2l5 4-5 4V7H0z" fill="#3ea4f0" /></I></QuickButton>
      <QuickButton aria-label="Plot"><I><path d="M3 0h10v4H3z" fill="#fff" stroke="none" /><path d="M0 5h16v7H0z" fill="#f2f2f2" stroke="none" /><path d="M2 7h2" stroke="#3a6" /><path d="M3 10h10v5H3z" fill={B} stroke="#fff" /></I></QuickButton>
      <QuickButton aria-label="Undo"><I s="none"><path d="M0 8l7-5v3c5 0 8 2 9 7-2-3-5-3-9-3v3z" fill="#f4f4f4" /></I></QuickButton>
      <QuickButton $w={11} aria-label="Undo list"><Caret w={5} /></QuickButton>
      <QuickButton $w={25} aria-label="Redo"><I s="none"><path d="M16 8L9 3v3C4 6 1 8 0 13c2-3 5-3 9-3v3z" fill="#c2c2c2" /></I></QuickButton>
      <QuickButton $w={11} aria-label="Redo list"><Caret w={5} /></QuickButton>
      <QuickButton $w={25} aria-label="Match"><I><path d="M0 0h11v15H0z" fill="#444" stroke="none" /><path d="M2 2h7v4H2z" fill={B} stroke="none" /><path d="M2 8.5h7M2 11.5h5" /><path d="M8 11l4-3 4 5-2 3z" fill={Y} stroke="none" /></I></QuickButton>
      <QuickButton $w={23} aria-label="Batch plot"><I><path d="M3 0h10v4H3z" fill="#fff" stroke="none" /><path d="M0 5h15v6H0z" fill="#f2f2f2" stroke="none" /><path d="M3 9h8v5H3z" fill="#fff" stroke="#666" /><path d="M7 12.5h6M11 9.5l4 3-4 3" stroke="#2a90e0" strokeWidth="2" /></I></QuickButton>
      <QuickButton $w={14} aria-label="Customize"><I w={8} h={8} s="none"><path d="M0 0h8v1H0zM0 3h8L4 7z" fill="#fff" /></I></QuickButton>
    </QuickBar>
  );
}

/* ---------- CAD drawing ---------- */
const LABELS = [
  [918, 337, 'CONSTRUCTION'], [1007, 337, 'JOINT'],
  [646, 629, 'SCREED'],
  [649, 665, 'WATER'], [690, 665, 'PROOFING'],
  [649, 680, 'IF'], [665, 680, 'REQ.'],
  [646, 699, 'BLINDING'], [702, 699, 'CONC.'],
  [646, 726, 'CONTINUOUS'], [723, 726, 'WATER'],
  [648, 741, 'STOP'], [682, 741, 'AS'], [705, 741, 'NOTED'],
  [879, 399, 'T/8', true],
];
[0, 235].forEach(d => LABELS.push(
  [926, 370 + d, '50', true], [954, 370 + d, 'DAI.', true],
  [1039, 370 + d, '50', true], [1067, 370 + d, 'DAI.', true],
  [913, 386 + d, '50%'], [943, 386 + d, 'BARS'],
  [1031, 386 + d, '50%'], [1061, 386 + d, 'BARS'],
  [935, 402 + d, 'STAGGER'], [990, 402 + d, 'SPLICE'], [1034, 402 + d, 'OF'],
  [945, 416 + d, 'ALTERNATE'], [1011, 416 + d, 'BARS'],
  [946, 431 + d, 'OF'], [965, 431 + d, 'CONTINUOUS'],
));
const VERTICAL = [[602, 508, 'D', true], [622, 549, 'BEAM'], [622, 502, 'DEPTH'], [648, 516, 'T', true], [648, 567, '25', true], [648, 588, '75', true], [843, 486, 'T/3', true], [843, 523, 'T/3', true], [843, 560, 'T/3', true], [913, 500, 'T/8', true]];
const TICKS = [[898, 372.5], [1010.5, 372.5], [1123, 372.5], [898, 607.5], [1010.5, 607.5], [1123, 607.5], [885.5, 406.5], [898, 406.5]];
const BACKTICKS = [[651.5, 456.5], [651.5, 567.5], [651.5, 572.5], [651.5, 585.5], [850.5, 456.5], [850.5, 493.5], [850.5, 530.5], [850.5, 567.5], [920.5, 483.5], [920.5, 493.5]];
const LEFT_BARS = [695, 739, 789, 833, 886.5];
const RIGHT_BARS = [928, 972.5, 1022, 1066.5, 1119.5, 1173.5];

function JointDrawing() {
  const dot = (x, y, c = '#74f0b4', r = 2.3) => <circle key={`${x}-${y}`} cx={x} cy={y} r={r} fill={c} />;
  return (
    <Drawing width="640" height="480" viewBox="580 310 640 480" fill="none" role="img" aria-label="Typical mat construction joint">
      <g stroke="#1111d8" strokeWidth="2">
        <path d="M674 438V505H667L683 521H674V595" />
        <path d="M674 456.5H1195" stroke="#1a0cf0" />
        <path d="M674 574H793" strokeWidth="3" stroke="#0f0fe8" />
      </g>
      <g stroke="#0b0bf0">
        <path d="M674 567.5H1195M674 585.5H785L791 581L793 573L799 567.5" />
        <path d="M1195.5 438V498.5H1188L1205 515.5H1195.5V581" strokeWidth="1.5" />
        <path d="M898.5 456V483L886 493.5V530L898.5 541V567" />
      </g>
      <g stroke="#b01414" strokeWidth="2">
        <path d="M898 336V379M898 390V412M898 416V456M898 571V657M1123 336V382M1123 396V409M1123 421V467M1123 571V657" />
        <path d="M898 338.5H1038" strokeWidth="1" />
        <path d="M891 372.5H1130M891 608H1130" />
      </g>
      <g stroke="#e60000">
        <path d="M1010.5 354V386M1010.5 589V621M885.5 389V493M879 406.5H904" />
        <path d="M651.5 450V592M645 456.5H674M645 567.5H674M645 572.5H674M645 585.5H674" />
        <path d="M850.5 450V573M844 456.5H856M844 493.5H936M844 530.5H885M844 567.5H856M898 483.5H936M920.5 477V500" />
        {TICKS.map(([x, y]) => <path key={`${x}${y}`} d={`M${x - 3} ${y + 3}l6-6`} strokeWidth="1.5" />)}
        {BACKTICKS.map(([x, y]) => <path key={`${x}${y}`} d={`M${x - 3} ${y - 3}l6 6`} />)}
      </g>
      <path d="M607 445V559" stroke="#6a6a6a" strokeWidth="2" />
      <path d="M604 444l6 6M604 556l6 6" stroke="#8a8a8a" />
      <g strokeWidth="1">
        <path d="M674 468.5H1123M923 472.5H1196M923 552.5H1195" stroke="#6f7f78" />
        <path d="M674 467.5H1123M923 471.5H1196M923 551.5H1195M848 564.5H952" stroke="#74e0b0" />
        <path d="M674 556H1123" stroke="#549c80" strokeWidth="2" />
      </g>
      {LEFT_BARS.map(x => [dot(x, 470.5), dot(x, 553.5)])}
      {RIGHT_BARS.map(x => [dot(x, 474.5), dot(x, 549)])}
      {[848, 881.5, 915.5, 949].map(x => dot(x, 562.5))}
      <g stroke="#00d800">
        <path d="M741.5 571V631.5H647M772.5 574V667.5H647M790.5 581V701.5H647M829.5 568V728.5H648" />
        <path d="M791 771.5H1113" strokeWidth="1.5" />
      </g>
      {[[741, 570.5], [772.5, 574], [790.5, 581.5], [829.5, 568]].map(([x, y]) => dot(x, y, '#00f000'))}
      {LABELS.map(([x, y, t, wide]) => <Cad key={`${x}-${y}`} $wide={wide} x={x} y={y}>{t}</Cad>)}
      {VERTICAL.map(([x, y, t, wide]) => <Cad key={`${x}-${y}`} $wide={wide} transform={`translate(${x} ${y}) rotate(-90)`}>{t}</Cad>)}
      {[[793, 'TYPICAL'], [875, 'MAT'], [921, 'CONSTRUCTION'], [1065, 'JOINT']].map(([x, t]) => <CadTitle key={t} x={x} y="768">{t}</CadTitle>)}
    </Drawing>
  );
}

function NavTools() {
  return (
    <NavBar>
      <I w={30} h={210} s="#3c4145">
        <circle cx="25" cy="4.5" r="3.5" fill="#43484c" stroke="none" /><path d="M23.5 3l3 3M26.5 3l-3 3" stroke="#777" />
        <path d="M5 29a10 10 0 0 1 10-10h11v10a10 10 0 0 1-21 0z" /><circle cx="15.5" cy="29" r="6" /><path d="M8 36l3-3M23 36l-3-3" />
        <path d="M13.5 49h5l-2.5 3zM13.5 119h5l-2.5 3zM13.5 157h5l-2.5 3z" fill="#3c4145" stroke="none" />
        <path d="M3 55.5h25M3 163.5h25" stroke="#6d7276" />
        <path d="M11 83c-2-4-5-7-7-10 1-2 4 0 6 2l-3-11c1-2 3-1 3 1l3 7V61c1-2 3-1 3 0l1 11 3-10c1-1 3 0 2 2l-2 9 4-6c1-1 3 0 2 1l-5 10-3 5z" />
        <path d="M4 89l15 15M19 89L4 104M4 93v-4h4M15 89h4v4M4 100v4h4" strokeWidth="1.5" /><circle cx="19" cy="103" r="5" fill="#565c61" /><path d="M23 107l4 4" strokeWidth="3" />
        <path d="M13 148v-17h-3l5-5 5 5h-3v17zM12 134c-12 2-10 10 3 10s14-7 5-10" /><path d="M7 142l5-4v7z" fill="#3c4145" />
        <path d="M4 168.5h5v6H4zM12 168.5h5v6h-5zM20 168.5h6v6h-6zM4 177.5h16v13H4z" /><path d="M9 180v8l7-4z" fill="#3c4145" />
        <circle cx="25" cy="205" r="3.5" fill="#43484c" stroke="none" /><path d="M23 205h4" stroke="#777" />
      </I>
    </NavBar>
  );
}

function DrawingArea() {
  return (
    <Canvas>
      <ViewLabel>[−][Top][2D Wireframe]</ViewLabel>
      <ViewportButtons>
        <PlainButton aria-label="Minimize drawing"><I w={12} h={14}><path d="M0 10h11" stroke="#fff" strokeWidth="3" /></I></PlainButton>
        <PlainButton aria-label="Restore drawing"><I w={14} h={14} s="#eee"><path d="M5 3V2h6v7h-2" /><path d="M2 5h6v6H2z" strokeWidth="2" /></I></PlainButton>
        <PlainButton aria-label="Close drawing"><I w={14} h={14} s="#fff" sw={2.2}><path d="M2 3l8 8M10 3l-8 8" /></I></PlainButton>
      </ViewportButtons>
      <JointDrawing />
      <Compass width="134" height="146" viewBox="0 -4 134 146" fill="none">
        <circle cx="67" cy="68" r="53.5" stroke="#48494c" strokeWidth="13" />
        <rect x="41.5" y="42.5" width="51" height="51" fill="#b0b1b3" stroke="#8a8b8c" />
        <rect x="51" y="52" width="32" height="32" fill="#a3a4a6" />
        <text x="67" y="72" fontSize="12" fill="#4a4b4d">TOP</text>
        <g fontSize="22" fill="#c2c3c5"><text x="67" y="20">N</text><text x="67" y="132">S</text><text x="11" y="76">W</text><text x="123" y="76">E</text></g>
      </Compass>
      <Wcs>WCS<I w={9} h={5} s="#777"><path d="M.5 .5h8L4.5 4.5z" fill="#bbb" /></I></Wcs>
      <NavTools />
      <Ucs width="78" height="80" viewBox="14 911 78 80" fill="none" stroke="#f0f0f0">
        <path d="M20.5 932V982.5H71M16.5 977.5h9v9h-9zM22 915l6.5 7 6.5-7M28.5 922v7M75 968l13 14M88 968l-13 14" />
      </Ucs>
      <CommandDock>
        <History>
          <HistoryLine $c="#b0b0b0">Command:</HistoryLine>
          <HistoryLine $c="#dcdcdc">**** No System Variable Changed ****</HistoryLine>
          <HistoryLine $c="#fff">Command:</HistoryLine>
        </History>
        <CommandBar>
          <CommandTools>
            <I w={5} h={18} s="#999"><path d="M1 0v18M4 0v18" strokeDasharray="2 1" /></I>
            <PlainButton aria-label="Close command line"><Cross c="#ccc" size={9} sw={1.5} /></PlainButton>
            <PlainButton aria-label="Customize"><I s="none"><path d="M1 4l3 1 1-1L4 1c3-1 5 1 4 4l7 8-2 2-7-8C3 8 1 6 1 4z" fill="#ccc" /></I></PlainButton>
          </CommandTools>
          <PlainButton aria-label="Recent commands">
            <I w={30} h={16} s="#666"><rect x="5.5" y="1.5" width="14" height="12" fill="#aaa" /><path d="M8 4l4 3.5L8 11M13 11.5h4" stroke="#333" /><path d="M23 5h6l-3 4z" fill="#555" stroke="none" /></I>
          </PlainButton>
          <CommandInput placeholder="Type a command" aria-label="Command" />
          <PlainButton aria-label="Expand history"><I w={16} h={8} s="none"><path d="M4 6h8L8 1z" fill="#222" /></I></PlainButton>
        </CommandBar>
      </CommandDock>
    </Canvas>
  );
}

/* ---------- status tray ---------- */
const Arr = ({ w = 16, line }) => <Cell $w={w} $line={line} aria-label="Options"><Caret w={7} /></Cell>;
const Man = ({ extra }) => <I w={18} h={18} s="none"><path d="M9 1l2 4v3l2 2 3 6h-3l-3-5-1 5-1-5-3 5H2l3-6 2-2V5z" fill="#e8e8e8" />{extra}</I>;

function StatusTray() {
  return (
    <Tray>
      <Group><Coords>533740.0394, -3326.5607, 0.0000</Coords></Group>
      <Group><StatusText $w={47} $size={12}>MODEL</StatusText></Group>
      <Group>
        <Cell $w={24} aria-label="Grid"><I><path d="M4.5 0v16M8.5 0v16M12.5 0v16M0 4.5h16M0 8.5h16M0 12.5h16" /></I></Cell>
        <Cell $w={24} aria-label="Snap"><I><path d="M1 3h14M1 8h14M1 13h14" strokeWidth="2" strokeDasharray="2 4" /></I></Cell><Arr w={15} />
      </Group>
      <Group>
        <Cell $w={25} $line aria-label="Infer"><I><path d="M9.5 1.5h5v5h-5zM9.5 6v4" /><path d="M1 10h7v6H1z" fill={W} /></I></Cell>
        <Cell $w={25} $line $on aria-label="Dynamic input"><I s="#fff"><path d="M1 4.5h6M4 1.5v6" /><path d="M6 9h10v4H6z" fill="#fff" /></I></Cell>
        <Cell $w={25} $line $on aria-label="Ortho"><I s="#fff"><path d="M1.5 0v15.5H16M2 9.5h5V15" /></I></Cell>
        <Cell $w={23} aria-label="Polar"><I><circle cx="7" cy="9" r="6" /><path d="M3 14L13 2M7 9h9M12 6v6" /></I></Cell><Arr w={16} line />
        <Cell $w={23} aria-label="Isodraft"><I><path d="M8 0v16" stroke={G} /><path d="M1 1l14 14" stroke={R} /><rect x="7" y="6" width="3" height="3" fill="#555" /></I></Cell><Arr w={17} line />
        <Cell $w={24} $on aria-label="Tracking"><I s="#fff"><path d="M15 1L1 14.5h15M6 7l4 3" /></I></Cell>
        <Cell $w={24} $on aria-label="Object snap"><I w={18} s="#fff"><rect x="1" y="1" width="4" height="4" /><path d="M7 3.5h9v12H3.5V7" /></I></Cell><Arr w={16} line />
        <Cell $w={24} aria-label="Lineweight"><I><path d="M0 2.5h16M9 6.5h7" /><path d="M0 6.5h9M0 10h16" strokeWidth="2" /><path d="M0 14h11" strokeWidth="3" /></I></Cell>
        <Cell $w={24} $on $line aria-label="Transparency"><I s="#fff"><rect x=".5" y=".5" width="15" height="15" /><path d="M3 3h3v3H3zM9 3h3v3H9zM6 6h3v3H6zM3 9h3v3H3zM9 9h3v3H9zM12 6h2v3h-2zM6 12h3v2H6z" fill="#fff" stroke="none" /></I></Cell>
        <Cell $w={25} $line aria-label="Selection cycling"><I><path d="M0 3.5h6M3.5 0v6" /><path d="M5 5h8v3" /><rect x="6" y="6" width="10" height="10" fill={G} stroke="none" /></I></Cell>
        <Cell $w={24} aria-label="3D snap"><I><path d="M4 9V4l4-3h7v8l-4 4H7M4 4h7v8M11 4l4-3" /><rect x="1" y="11" width="4" height="4" stroke={Y} /></I></Cell><Arr w={16} />
      </Group>
      <Group>
        <Cell $w={24} $on aria-label="Dynamic UCS"><I s="#fff"><path d="M3.5 1v12.5H16M1 3l2.5-3L6 3M13 11l3 2.5-3 2.5M10 2L7 6h4L8 10" strokeWidth="1.5" /></I></Cell>
        <Cell $w={23} aria-label="Filter"><I><path d="M4 4h8v9H4zM4 4l3-3h8v9l-3 3" strokeDasharray="2 1" /><Dots pts={[[2, 5], [2, 14], [11, 14]]} r={2} /></I></Cell><Arr w={16} />
        <Cell $w={23} $on aria-label="Gizmo"><I s="#fff"><path d="M8 .5L1.5 12.5 8 15.5l6.5-3zM8 1v7M8 8l-6 4M8 8l6 4" /><circle cx="8" cy="8" r="3.5" /></I></Cell><Arr w={15} />
      </Group>
      <Group>
        <Cell $w={24} $on aria-label="Annotation visibility"><Man extra={<circle cx="14" cy="4" r="2" stroke="#fff" />} /></Cell>
        <Cell $w={24} aria-label="Auto scale"><Man extra={<path d="M15 0l-3 4h3l-2 4" stroke="#fff" />} /></Cell>
        <Cell $w={24} aria-label="Annotation"><Man /></Cell>
        <StatusText $w={59}>1:1 / 100%</StatusText><Arr w={15} />
      </Group>
      <Group>
        <Cell $w={24} aria-label="Workspace"><I><circle cx="8" cy="8" r="4" strokeWidth="3" /><circle cx="8" cy="8" r="6.5" strokeWidth="3" strokeDasharray="2.5 2.6" /></I></Cell><Arr w={16} line />
        <Cell $w={24} aria-label="Monitor"><I s="#eee" sw={1.5}><path d="M8 0v16M0 8h16" /></I></Cell>
      </Group>
      <Group>
        <Cell $w={24} aria-label="Units"><I><path d="M5 0h7v2H8v2h4v2H8v2h4v2H8v2h4v4H5z" fill={W} stroke="none" /></I></Cell>
        <StatusText $w={54}>Decimal</StatusText><Arr w={20} line />
        <Cell $w={25} $line aria-label="Quick properties"><I><rect x="2.5" y=".5" width="11" height="15" /><path d="M4 4h1M4 8h1M4 12h1M7 4h5M7 8h5M7 12h5" strokeWidth="1.5" /></I></Cell>
        <Cell $w={26} aria-label="Lock UI"><I><path d="M15 6V1.5H.5v12H7M.5 3h15" /><rect x="8" y="10" width="6" height="5" fill={W} /><path d="M12 10V7.5h3V10" /></I></Cell><Arr w={16} line />
        <Cell $w={25} $line aria-label="Isolate"><I><path d="M1.5 1.5h5v5h-5zM2.5 15.5L6 9.5l3.5 6z" /><circle cx="13" cy="7" r="2.5" /></I></Cell>
        <Cell $w={26} $on aria-label="Graphics performance"><I s="#fff"><circle cx="8" cy="8" r="7.5" fill="#a8c8e8" /><path d="M6 10l7-7" strokeWidth="2" /></I></Cell>
      </Group>
      <Group>
        <Cell $w={25} aria-label="Plot status"><I><path d="M3 0h10v5H3zM0 5h16v7H0z" /><path d="M3 9h10v5H3z" fill={Y} stroke="#555" /></I></Cell>
        <Cell $w={24} aria-label="Trusted file"><I><path d="M1 0h8l4 4v10H1z" fill={B} stroke="none" /><path d="M5 2v8M2 6h8" stroke="#fff" /><path d="M7 12l3 3 6-6" stroke="#38b838" strokeWidth="2" /></I></Cell>
      </Group>
      <Group>
        <Cell $w={25} aria-label="Clean screen"><I><rect x=".5" y="1.5" width="15" height="13" /><path d="M3.5 9v3h3M9.5 4.5h3v3M10 7l2-2M4 12l2-2" /></I></Cell>
        <Cell $w={22} aria-label="Customization"><I s="#e8e8e8" sw={2}><path d="M0 3h16M0 8h16M0 13h16" /></I></Cell>
      </Group>
    </Tray>
  );
}

export default function App() {
  return (
    <Page>
      <Global />
      <TitleBar>
        <QuickAccess />
        <WindowTitle><span>Autodesk AutoCAD 2019</span><span>CONSTRUCTION JOINT.dwg</span></WindowTitle>
        <InfoCenter>
          <QuickButton $w={14} aria-label="Collapse search"><I w={5} h={8} s="none"><path d="M0 0l5 4-5 4z" fill="#fff" /></I></QuickButton>
          <SearchBox placeholder="Type a keyword or phrase" aria-label="Search" />
          <QuickButton $w={25} aria-label="Search help"><I s="#333"><path d="M1 15V8l2-6h3l1 5v8zM9 15V7l1-5h3l2 6v7zM7 7h2" fill="#eee" /></I></QuickButton>
          <QuickButton aria-label="Account"><I s="#333"><circle cx="8" cy="5" r="4" fill="#fff" /><path d="M1 15.5c0-4 4-4 5-6h4c1 2 5 2 5 6z" fill="#fff" /></I></QuickButton>
          <SignIn>Sign In</SignIn>
          <Caret w={5} />
          <QuickButton $w={34} aria-label="Exchange"><I s="#2a3040"><path d="M0 2h3l3 9h8l2-6H4" fill="#dde" strokeWidth="1.5" /><circle cx="6" cy="14" r="1.5" fill="#fff" /><circle cx="13" cy="14" r="1.5" fill="#fff" /></I></QuickButton>
          <QuickButton $w={22} aria-label="Stay connected"><I s="#2a3060"><path d="M8 2L2 13h12z" strokeWidth="3" /><path d="M8 2L2 13h12z" stroke="#dde" /></I></QuickButton>
          <Caret w={5} />
          <Divider />
          <QuickButton $w={30} aria-label="Help"><I w={18} h={18} s="#444"><circle cx="9" cy="9" r="8" fill="#e8eaf4" /><path d="M6.5 7c0-4 5-3.5 5-.5 0 2-2.5 2-2.5 4M9 12v2" stroke="#2a3470" strokeWidth="2" /></I></QuickButton>
          <Caret w={5} />
        </InfoCenter>
        <WindowButtons>
          <WindowButton aria-label="Minimize"><I w={10} h={10} s="#fff"><path d="M0 5.5h10" /></I></WindowButton>
          <WindowButton aria-label="Restore"><I w={10} h={10} s="#fff"><rect x=".5" y="2.5" width="7" height="7" rx="1" /><path d="M2.5 1.5l1-1h5l1 1v5l-1 1" /></I></WindowButton>
          <WindowButton aria-label="Close"><I w={10} h={10} s="#fff"><path d="M0 0l10 10M10 0L0 10" /></I></WindowButton>
        </WindowButtons>
        <AppButton aria-label="Application menu">
          <I w={39} h={39} s="none"><path d="M4 28L12 3h9l6 24-7 2-3-9c-3 1-5 2-6 8z" fill="#c8161d" /><path d="M12 15l3-9 3 8z" fill="#e8d0d0" /><path d="M4 28l5-8h4l-3 8zM17 20l6 0 4 7-7 2z" fill="#8e2a20" /><path d="M30 18h7l-3.5 4z" fill="#222" /></I>
        </AppButton>
      </TitleBar>
      <RibbonTabs>
        {RIBBON_TABS.map(([t, w], i) => <RibbonTab key={t} $w={w} $active={i === 0}>{t}</RibbonTab>)}
        <PlainButton aria-label="Minimize ribbon"><I w={56} h={18} s="none"><rect x="23" y="4" width="14" height="8" rx="2" fill="#f2f2f2" /><path d="M27 10h6l-3-4z" fill="#333" /><path d="M42 7h5l-2.5 3z" fill="#fff" /></I></PlainButton>
      </RibbonTabs>
      <RibbonArea />
      <FileTabs>
        {FILE_TABS.map(([t, w], i) => (
          <FileTab key={t} $w={w} $active={i === 9}>
            <span>{t}</span>
            {i > 0 && <PlainButton aria-label={`Close ${t}`}><Cross /></PlainButton>}
          </FileTab>
        ))}
        <NewTab aria-label="New drawing"><I w={8} h={8} s="#bbb" sw={2}><path d="M4 0v8M0 4h8" /></I></NewTab>
      </FileTabs>
      <DrawingArea />
      <StatusBar>
        <LayoutTabs>
          <LayoutTab $w={56} $active>Model</LayoutTab>
          <LayoutTab $w={65}>Layout1</LayoutTab>
          <LayoutTab $w={24} aria-label="New layout"><I w={8} h={8} s="#ccc" sw={2}><path d="M4 0v8M0 4h8" /></I></LayoutTab>
        </LayoutTabs>
        <StatusTray />
      </StatusBar>
      <Balloon role="status">
        <BalloonHead>
          <I s="none"><circle cx="8" cy="8" r="7.5" fill="#6f86c8" /><circle cx="8" cy="9" r="5" fill="#1c2f9c" /><path d="M8 7v6M8 3v2" stroke="#fff" strokeWidth="2" /></I>
          <strong>Plot and Publish Job Complete</strong>
          <BalloonClose aria-label="Dismiss"><Cross c="#000" size={9} sw={1.8} /></BalloonClose>
        </BalloonHead>
        <BalloonText>No errors or warnings found</BalloonText>
        <BalloonLink href="#details">Click to view plot and publish details...</BalloonLink>
        <Tail width="22" height="20"><path d="M1 1L19 19V1" fill="#ffffe1" stroke="#000" /><path d="M2 0h17v2H2z" fill="#ffffe1" /></Tail>
      </Balloon>
    </Page>
  );
}
